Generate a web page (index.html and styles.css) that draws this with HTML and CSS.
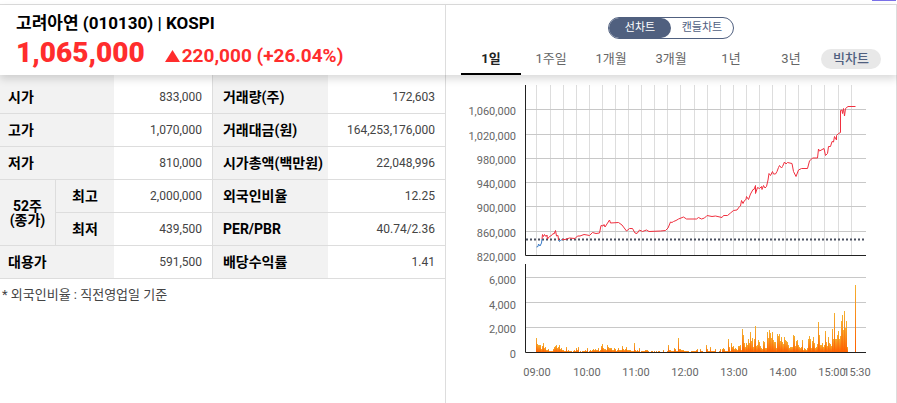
FILE: index.html
```html
<!DOCTYPE html>
<html lang="ko">
<head>
    <meta charset="UTF-8">
    <meta name="viewport" content="width=device-width, initial-scale=1.0">
    <title>고려아연 (010130)</title>
    <link rel="stylesheet" href="styles.css">
</head>
<body>
    <div class="top-line"><span class="top-mark"></span></div>

    <header class="header">
        <div class="stock">
            <h1>고려아연 (010130) | KOSPI</h1>
            <p class="price">
                <strong>1,065,000</strong>
                <span class="change"><svg class="up" viewBox="0 0 15 12"><path d="M7.500 0L15 12H0z"/></svg>220,000 (+26.04%)</span>
            </p>
        </div>
        <div class="chart-menu">
            <div class="chart-type">
                <button type="button" class="on">선차트</button>
                <button type="button">캔들차트</button>
            </div>
            <nav class="period">
                <button type="button" class="on">1일</button>
                <button type="button">1주일</button>
                <button type="button">1개월</button>
                <button type="button">3개월</button>
                <button type="button">1년</button>
                <button type="button">3년</button>
                <button type="button" class="big">빅차트</button>
            </nav>
        </div>
    </header>

    <main class="content">
        <section class="info">
            <table>
                <colgroup>
                    <col class="c1"><col class="c2"><col class="c3"><col class="c4"><col class="c5">
                </colgroup>
                <tr>
                    <th colspan="2">시가</th><td>833,000</td>
                    <th class="line">거래량(주)</th><td>172,603</td>
                </tr>
                <tr>
                    <th colspan="2">고가</th><td>1,070,000</td>
                    <th class="line">거래대금(원)</th><td>164,253,176,000</td>
                </tr>
                <tr>
                    <th colspan="2">저가</th><td>810,000</td>
                    <th class="line">시가총액(백만원)</th><td>22,048,996</td>
                </tr>
                <tr>
                    <th rowspan="2" class="center week">52주<br>(종가)</th>
                    <th class="center line">최고</th><td>2,000,000</td>
                    <th class="line">외국인비율</th><td>12.25</td>
                </tr>
                <tr>
                    <th class="center line">최저</th><td>439,500</td>
                    <th class="line">PER/PBR</th><td>40.74/2.36</td>
                </tr>
                <tr>
                    <th colspan="2">대용가</th><td>591,500</td>
                    <th class="line">배당수익률</th><td>1.41</td>
                </tr>
            </table>
            <p class="note">* 외국인비율 : 직전영업일 기준</p>
        </section>

        <section class="chart">
            <svg viewBox="0 0 450 320" role="img" aria-label="1일 선차트">
                <defs>
                    <linearGradient id="bar" x1="0" y1="0" x2="0" y2="1">
                        <stop offset="0" stop-color="#f5b030"/>
                        <stop offset="1" stop-color="#ff6000"/>
                    </linearGradient>
                </defs>

                <!-- 가격 차트 -->
                <path id="timeGrid" class="grid-v"/>
                <path class="grid-h" d="M79 33.500H420M79 58.500H420M79 82.500H420M79 106.500H420M79 130.500H420M79 155.500H420"/>
                <path class="axis" d="M79.500 9V179.500H420"/>
                <path class="base" d="M80 163.500H418"/>
                <polyline class="up-line" points="96,163 96.500,158.500 97.500,160.500 98.500,158.500 100,160.500 101,159 101.500,163 103.500,160.500 105.500,159.500 107,157.500 108,158 109.500,154.500 110.500,160 112,159.500 112.500,164"/>
                <polyline class="up-line" points="116,163.500 119,163.500 123.500,162 129,162.500 131.500,160 134,160 138,158.500 141,159 143.500,159.500 146.500,156.500 150,157.500 153.500,157 155,149.500 157,150 158,148.500 159,151 163.500,144 164.500,147 172.500,146.500 176,149 180.500,155 183.500,152.500 186.500,152.500 189,157 191,157.500 193.500,154 196.500,155.500 200.500,154 203,155.500 214.500,155 219.500,154.500 222,152 224.500,146 226,146.500 227.500,145.500 230,144.500 232.500,143 237.500,141 240.500,143 250.500,143 252.500,141.500 255.500,143 258.500,142 261,139.500 266,140.500 269.500,140 276,141.500 277.500,139.500 281.500,139.500 284.500,137 287.500,134.500 291,134 293.500,130.500 294.500,130 295.500,124.500 297,127.500 298.500,124.500 300,123.500 300.500,120.500 302.500,123.500 304.500,118 307,113.500 308,113.500 309.500,109.500 309.500,117.500 311.500,111.500 313.500,112.500 315.500,110.500 316,113.500 317.500,109.500 319,112 320.500,110.500 322,104 323,97.500 324.500,99.500 326.500,95.500 327.500,98 329.500,98 331,95.500 332.500,91.500 333.500,89.500 335.500,92 336.500,90.500 338.500,86 340,88 341.500,86.500 346,87.500 347.500,95.500 350,100.500 352.500,94 355.500,92.500 361.500,92.500 363.500,85 366.500,82 371.500,82 372.500,73 373.500,75 378,72.500 379.500,79.500 381.500,77.500 382.500,70.500 384.500,70.500 386,65.500 387.500,66 388.500,60.500 390.500,64 390.500,59.500 392.500,57.500 394.500,56.500 394.500,34.500 396,34 396.500,37.500 397.500,32.500 398.500,40 399.500,32.500 402,30.500 409.500,30.500"/>
                <polyline class="down-line" points="90.500,171 92,170.500 92.500,168 94,170 95.500,167 96,163"/>
                <polyline class="down-line" points="112.500,164 113.500,165.500 114.500,164.500 116,163.500"/>
                <g class="y-label">
                    <text x="70" y="39">1,060,000</text>
                    <text x="70" y="64">1,020,000</text>
                    <text x="70" y="88">980,000</text>
                    <text x="70" y="112">940,000</text>
                    <text x="70" y="136">900,000</text>
                    <text x="70" y="161">860,000</text>
                    <text x="70" y="185">820,000</text>
                </g>

                <!-- 거래량 차트 -->
                <path class="grid-h" d="M79 201.500H420M79 226.500H420M79 251.500H420"/>
                <g id="volume" fill="url(#bar)"></g>
                <path class="axis" d="M79.500 188V276.500H420"/>
                <g class="y-label">
                    <text x="70" y="208">6,000</text>
                    <text x="70" y="233">4,000</text>
                    <text x="70" y="257">2,000</text>
                    <text x="70" y="282">0</text>
                </g>
                <g class="x-label">
                    <text x="91" y="300">09:00</text>
                    <text x="141" y="300">10:00</text>
                    <text x="190" y="300">11:00</text>
                    <text x="239" y="300">12:00</text>
                    <text x="288" y="300">13:00</text>
                    <text x="337" y="300">14:00</text>
                    <text x="386" y="300">15:00</text>
                    <text x="411" y="300">15:30</text>
                </g>
            </svg>
        </section>
    </main>

    <script src="chart.js"></script>
</body>
</html>
```

FILE: styles.css
```css
* {
    box-sizing: border-box;
}

body {
    margin: 0;
    min-height: 100vh;
    display: flex;
    flex-direction: column;
    background: #fff;
    color: #444;
    font-family: Roboto, "Noto Sans CJK KR", sans-serif;
    font-size: 12px;
}

h1, p {
    margin: 0;
}

button {
    padding: 0;
    border: none;
    background: none;
    color: inherit;
    font-family: inherit;
    cursor: pointer;
}

.top-line {
    height: 5px;
    border-bottom: 1px solid #ddd;
}

.top-mark {
    display: block;
    width: 24px;
    height: 1px;
    margin-left: auto;
    margin-right: 1px;
    background: #7a70e8;
}

.header, .content {
    display: grid;
    grid-template-columns: 446fr 451fr;
}

.header {
    position: relative;
    z-index: 1;
    background: #fff;
    box-shadow: 0 4px 8px rgba(0, 0, 0, 0.15);
}

.stock, .info, .chart-menu, .chart {
    border-right: 1px solid #ddd;
}

.stock {
    padding: 6px 16px 0;
}

h1 {
    color: #000;
    font-size: 17px;
    line-height: 24px;
    font-weight: bold;
}

.price {
    display: flex;
    align-items: baseline;
    gap: 20px;
    color: #ff2d2d;
    font-weight: bold;
}

.price strong {
    font-size: 28px;
    line-height: 36px;
}

.change {
    font-size: 19px;
}

.up {
    width: 15px;
    height: 12px;
    margin-right: 2px;
    fill: #ff2d2d;
}

.chart-menu {
    padding: 12px 15px 0;
}

.chart-type {
    display: flex;
    width: 126px;
    height: 22px;
    margin: 0 auto;
    border: 1px solid #50607f;
    border-radius: 11px;
}

.chart-type button {
    flex: 1;
    color: #50607f;
    font-size: 11px;
    line-height: 20px;
}

.chart-type .on {
    border-radius: 10px;
    background: #50607f;
    color: #fff;
}

.period {
    display: grid;
    grid-template-columns: repeat(7, 1fr);
    align-items: start;
    margin-top: 6px;
}

.period button {
    height: 30px;
    padding-bottom: 2px;
    color: #666;
    font-size: 13px;
    line-height: 28px;
}

.period .on {
    border-bottom: 2px solid #000;
    padding-bottom: 0;
    color: #222;
    font-weight: bold;
}

.period .big {
    height: 20px;
    margin-top: 4px;
    padding: 0;
    border-radius: 10px;
    background: #e8e8e8;
    color: #50607f;
    font-weight: 500;
    line-height: 18px;
}

.content {
    flex: 1;
}

table {
    width: 100%;
    table-layout: fixed;
    border-collapse: separate;
    border-spacing: 0;
}

.c1 { width: 12.36%; }
.c2 { width: 13.26%; }
.c3 { width: 22.02%; }
.c4 { width: 26.07%; }
.c5 { width: 26.29%; }

th, td {
    height: 33px;
    padding: 0;
    border-bottom: 1px solid #ddd;
    line-height: 16px;
    white-space: nowrap;
}

tr:first-child th, tr:first-child td {
    height: 39px;
    padding-top: 6px;
}

th {
    padding-left: 8px;
    background: #f2f2f2;
    color: #000;
    font-size: 14px;
    text-align: left;
}

td {
    padding-right: 10px;
    text-align: right;
}

.line {
    padding-left: 10px;
    border-left: 1px solid #ddd;
}

.center {
    padding-left: 0;
    text-align: center;
}

.week {
    line-height: 14px;
}

.note {
    padding: 6px 2px;
    font-size: 13px;
    line-height: 20px;
}

.chart {
    padding-top: 1px;
}

.chart svg {
    display: block;
    width: 100%;
}

.grid-v, .grid-h, .axis, .base, .up-line, .down-line {
    fill: none;
    stroke-width: 1px;
}

.grid-v { stroke: #ddd; }
.grid-h { stroke: #c8c8c8; }
.axis { stroke: #222; }
.up-line { stroke: #f0303f; }
.down-line { stroke: #3a7bc8; }

.base {
    stroke: #4a5060;
    stroke-width: 2px;
    stroke-dasharray: 2 2;
}

.y-label, .x-label {
    fill: #666;
    font-size: 11px;
}

.y-label { text-anchor: end; }
.x-label { text-anchor: middle; }
```

FILE: chart.js
```javascript
// 15분 간격 세로선
const times = [90, 104, 117, 130, 143, 156, 169, 182, 195, 208, 221, 234, 248, 261, 274, 287, 300, 313, 326, 339, 352, 365, 378, 392, 405];
document.getElementById('timeGrid').setAttribute('d', times.map(x => `M${x + 0.5} 9V179`).join(''));

// 거래량: [시작 위치, 막대 높이들]
const volumes = [
    [0, [14, 8, 7, 7, 7, 3, 6, 9, 4, 5, 2, 2, 3, 1, 1, 1, 1, 3, 5, 6, 7, 4, 5, 7, 3, 4, 2, 2, 1, 1]],
    [30, [5, 1, 2, 1, 1, 1, 0, 1, 2, 1, 4, 2, 5, 0, 1, 0, 1, 1, 1, 2, 1, 4, 0, 1, 2, 1, 2, 3, 2, 3, 2, 2, 4, 1, 2, 6]],
    [66, [8, 4, 3, 3, 2, 7, 5, 4, 4, 4, 2, 2, 4, 3, 1, 2, 4, 2, 2, 2, 6, 3, 2, 3, 5, 2, 2, 2, 2, 1, 1, 1]],
    [98, [9, 2, 1, 2, 1, 4, 0, 1, 1, 1, 1, 2, 2, 2, 1, 0, 0, 1, 1, 0, 1, 0, 1, 0, 1, 1, 0, 0, 0, 2]],
    [131, [1, 7, 2, 2, 1, 1, 1, 4, 3, 1, 1, 14, 3, 3, 2, 2, 2, 1, 1, 1, 1, 1, 0, 0]],
    [155, [1, 1, 1, 1, 1, 2, 3, 0, 0, 3, 1, 1]],
    [170, [7, 3, 1, 1, 5, 1, 1, 1, 1, 3, 0, 0, 0, 1, 3, 0, 3, 4, 3, 1, 1, 1]],
    [192, [13, 5, 1, 9, 5, 6, 3, 4, 3, 2, 6, 6, 7, 2, 23, 17, 9, 5, 9, 7, 0]],
    [212, [13, 9, 20, 11, 14, 5, 13, 26, 6, 7, 12, 10, 6, 4, 3, 11, 10, 4, 4, 20]],
    [232, [14, 22, 19, 14, 20, 12, 10, 10, 4, 18, 16, 18, 11, 15, 10, 8, 15, 12, 11, 10]],
    [252, [7, 4, 5, 5, 5, 17, 16, 6, 11, 12, 7, 5, 4, 5, 12, 2, 4, 3, 2, 4]],
    [272, [13, 16, 13, 4, 11, 15, 9, 4, 5, 8, 30, 17, 7, 7, 9, 5, 7, 21, 10, 6]],
    [292, [15, 9, 8, 6, 23, 13, 39, 13, 13, 17, 21, 13, 16, 31, 37, 22, 41, 24, 31, 5]],
    [319, [67]]
];

const baseLine = 276;
const volume = document.getElementById('volume');

volumes.forEach(([start, heights]) => {
    heights.forEach((h, i) => {
        if (!h) return;
        const bar = document.createElementNS('http://www.w3.org/2000/svg', 'rect');
        bar.setAttribute('x', 90 + start + i);
        bar.setAttribute('y', baseLine - h);
        bar.setAttribute('width', 1);
        bar.setAttribute('height', h);
        volume.appendChild(bar);
    });
});
```
